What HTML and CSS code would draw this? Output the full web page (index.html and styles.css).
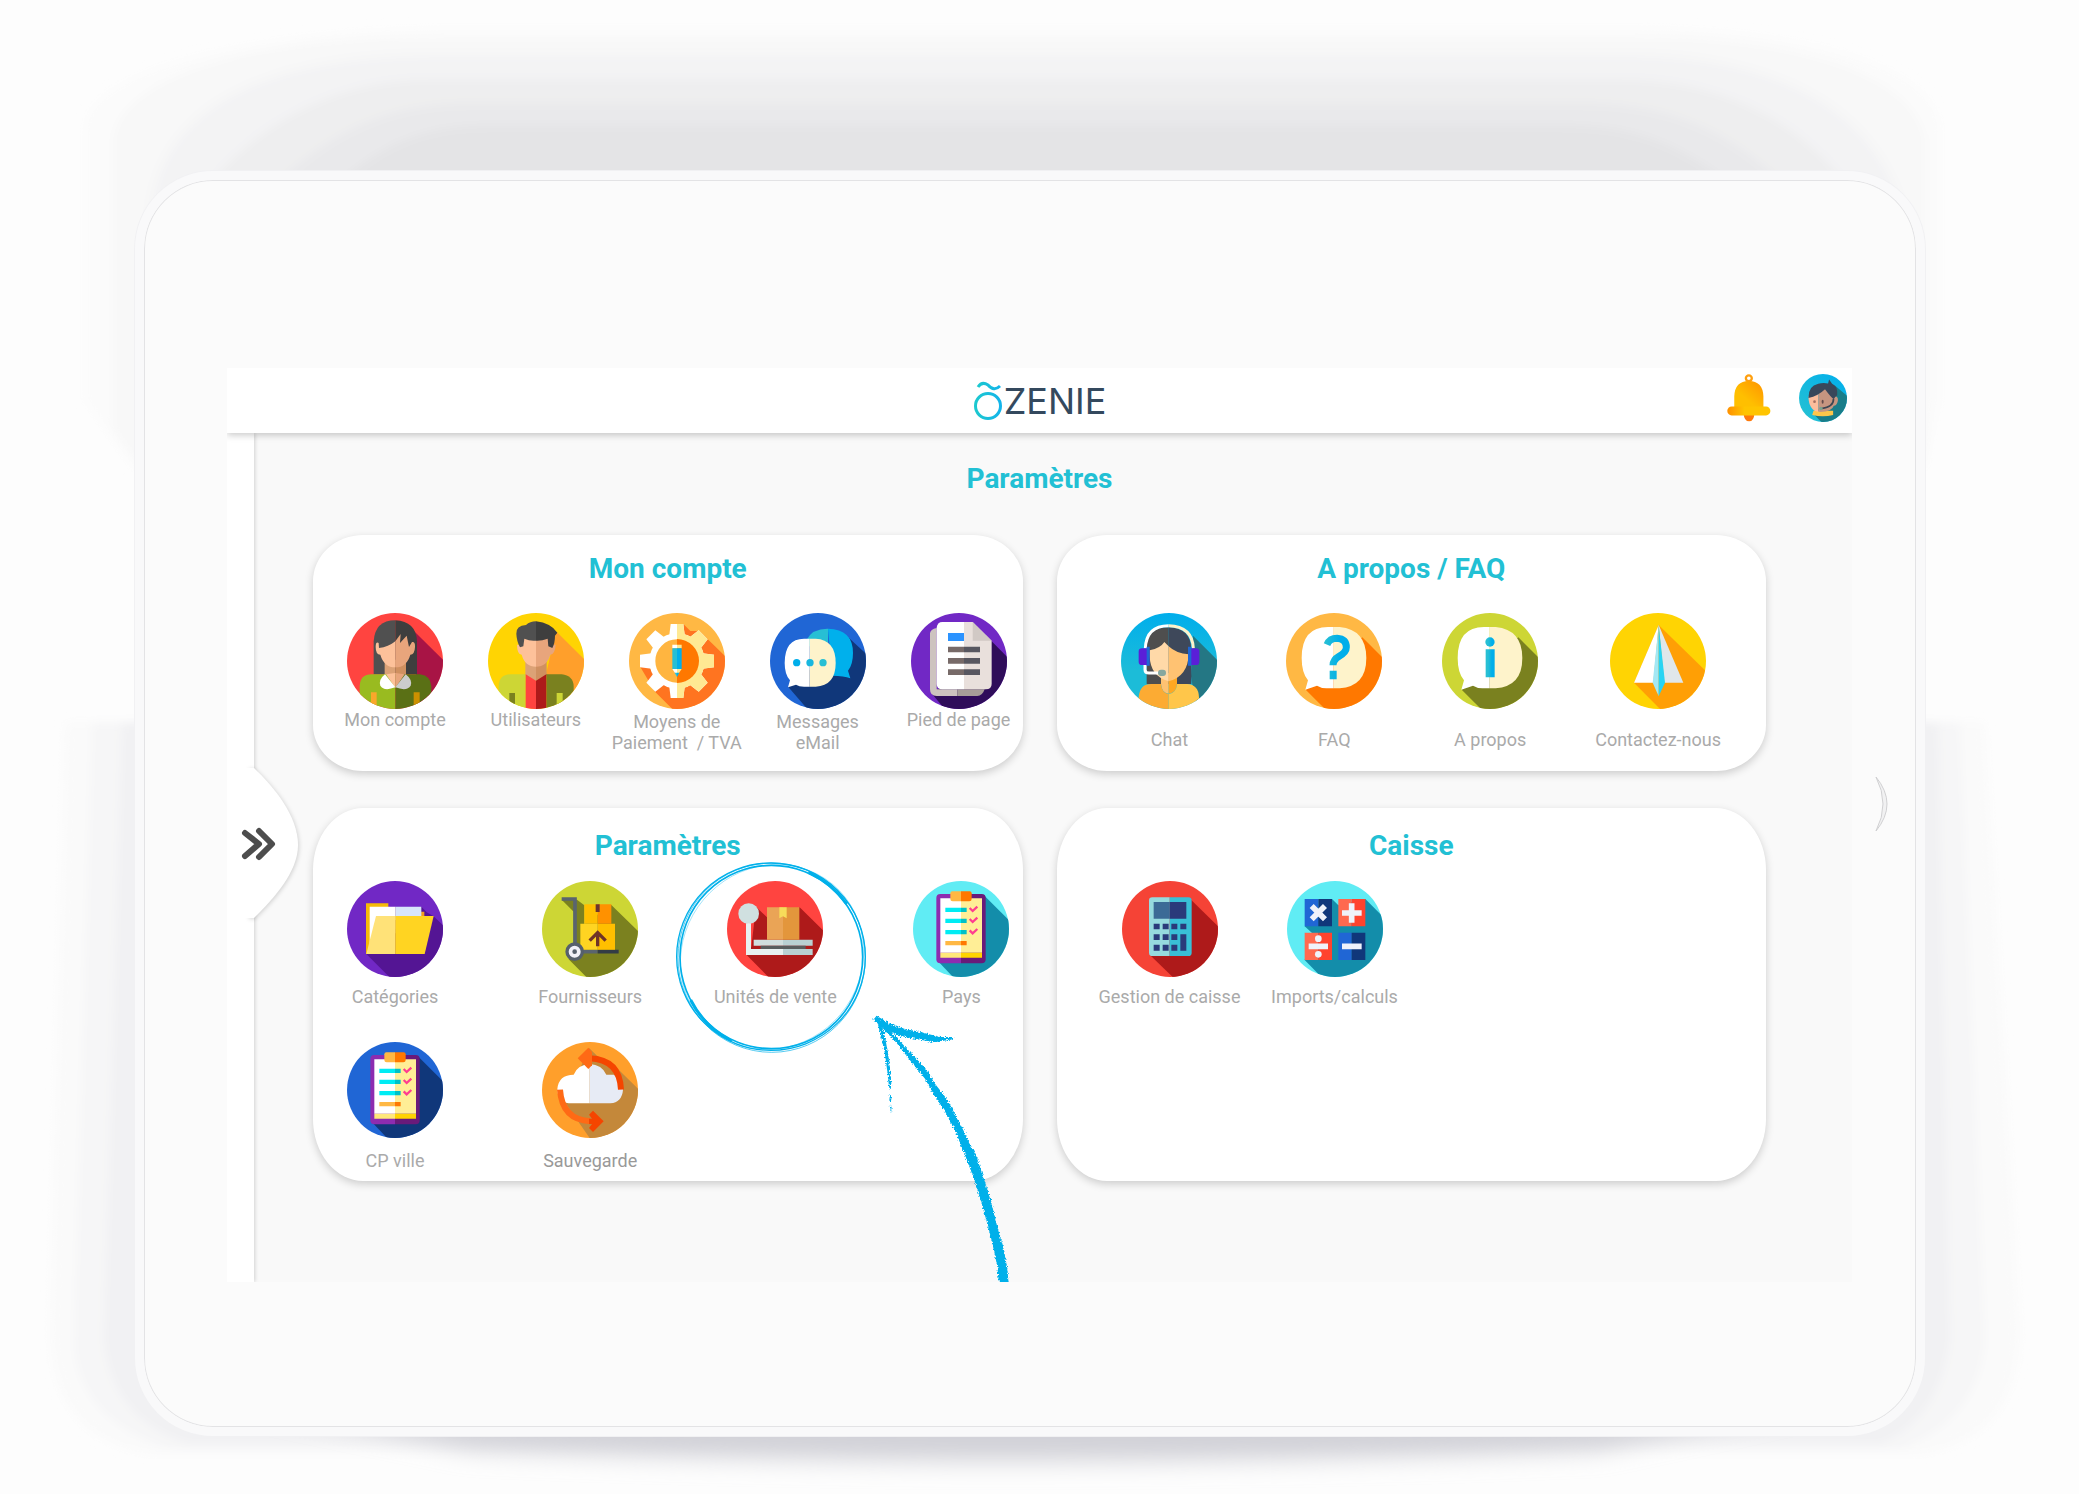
FILE: index.html
```html
<!DOCTYPE html>
<html lang="fr">
<head>
<meta charset="utf-8">
<meta name="viewport" content="width=device-width, initial-scale=1">
<title>Ozenie - Paramètres</title>
<link rel="stylesheet" href="styles.css">
</head>
<body>
<svg class="backdrop" viewBox="0 0 2079 1494" preserveAspectRatio="none" aria-hidden="true">
  <defs><filter id="soft" x="-10%" y="-10%" width="120%" height="120%"><feGaussianBlur stdDeviation="5"/></filter>
  <filter id="softer" x="-10%" y="-200%" width="120%" height="500%"><feGaussianBlur stdDeviation="12"/></filter></defs>
  <g filter="url(#soft)">
    <path fill="#fbfbfb" d="M85 400V130C85 60 300 28 450 28H1640C1780 28 1940 60 1940 130V400L1925 470H135Z"/>
    <path fill="#f8f8f8" d="M113 430V140C120 70 280 38 400 38H1660C1780 38 1915 70 1925 140V460H135Z"/>
    <path fill="#f3f3f4" d="M150 220C155 110 260 55 440 55H1620C1780 55 1880 110 1905 220Z"/>
    <path fill="#eeeeef" d="M205 190C260 120 340 80 430 80H1620C1720 80 1800 120 1850 190Z"/>
    <path fill="#e9e9eb" d="M270 190C330 130 390 103 470 103H1580C1670 103 1730 130 1790 190Z"/>
    <path fill="#e4e4e6" d="M330 190C380 145 420 125 490 125H1560C1640 125 1680 145 1740 190Z"/>
    <path fill="#fafafa" d="M65 723H1985L2020 1330Q2020 1440 1920 1455H150Q50 1440 50 1330Z"/>
    <path fill="#f6f6f7" d="M92 723H1960L1985 1340Q1980 1420 1900 1450H170Q75 1420 74 1340Z"/>
    <path fill="#f1f1f3" d="M122 723H1938L1950 1340Q1940 1420 1880 1445H190Q110 1420 104 1340Z"/>
  </g>
  <path filter="url(#softer)" fill="#d2d2d8" d="M230 1400H1830L1600 1450Q1040 1474 470 1450Z"/>
</svg>

<svg class="defs" aria-hidden="true">
  <symbol id="clipboard" viewBox="0 0 288 288">
    <path fill="#8d2cb0" d="M144 39H82Q70 39 70 51V235Q70 247 82 247H144Z"/><path fill="#691a7a" d="M144 39H206Q218 39 218 51V235Q218 247 206 247H144Z"/>
    <path fill="#fff" d="M82 52H144V215H82Z"/><path fill="#ffee96" d="M144 52H207V215H144Z"/>
    <path fill="#ffe87a" d="M82 215H144V230H82Z"/><path fill="#ffd300" d="M144 215H207V230H144Z"/>
    <path fill="#ffb844" d="M144 31H118Q112 31 112 37V54Q112 61 119 61H144Z"/><path fill="#ff7800" d="M144 31H170Q176 31 176 37V54Q176 61 169 61H144Z"/>
    <path fill="#00ecf4" d="M97 80H144V93H97ZM97 113H144V126H97ZM97 147H144V160H97Z"/><path fill="#00c0c8" d="M144 80H161V93H144ZM144 113H161V126H144ZM144 147H161V160H144Z"/>
    <path fill="#ffb844" d="M97 180H144V193H97Z"/><path fill="#ff7800" d="M144 180H161V193H144Z"/>
    <path fill="none" stroke="#ff3d90" stroke-width="7" d="M170 81L179 90L193 77M170 114L179 123L193 110M170 148L179 157L193 144"/>
  </symbol>
</svg>

<div class="device">
  <div class="screen">
    <header class="topbar">
      <a class="logo" href="#" aria-label="Ozenie">
        <svg class="logo-mark" viewBox="0 0 30 40" aria-hidden="true"><defs><linearGradient id="lg"><stop offset="0" stop-color="#1cc8cf"/><stop offset="1" stop-color="#14b4ea"/></linearGradient></defs><circle cx="15" cy="25" r="12.5" fill="none" stroke="url(#lg)" stroke-width="3"/><path d="M5 6Q9 0 15 4Q21 11 27 5" fill="none" stroke="url(#lg)" stroke-width="3"/></svg><span>ZENIE</span>
      </a>
      <div class="actions">
        <button class="action" type="button" aria-label="Notifications">
          <svg width="44" height="48" viewBox="83 41 131 145"><defs><linearGradient id="bell" x1="1" y1="0" x2="0" y2="1"><stop offset="0" stop-color="#ff9000"/><stop offset=".6" stop-color="#ffbf00"/></linearGradient><linearGradient id="rim"><stop offset="0" stop-color="#ff9000"/><stop offset=".4" stop-color="#ffc400"/></linearGradient></defs><circle cx="148" cy="54" r="9" fill="none" stroke="#ffa010" stroke-width="7"/><path fill="#ff7a0c" d="M132 160H165Q163 184 149 184Q134 184 132 160Z"/><path fill="url(#bell)" d="M104 140V108Q106 62 148 62Q190 62 192 108V140L200 150H96Z"/><rect x="83" y="139" width="130" height="27" rx="13" fill="url(#rim)"/></svg>
        </button>
        <button class="action" type="button" aria-label="Profil">
          <svg class="round" width="48" height="48" viewBox="299 41 142 142"><defs><linearGradient id="av" x1="0" y1="1" x2="1" y2="0"><stop offset="0" stop-color="#27c2d0"/><stop offset="1" stop-color="#00aeee"/></linearGradient></defs><path fill="url(#av)" d="M299 41H441V183H299Z"/><path fill="#197d89" d="M405 75L441 105V183H365L345 162Z"/><path fill="#fdc64a" d="M342 150H400V162Q370 170 338 162Z"/><path fill="#fdbd9c" d="M327 108Q345 95 356 92V153Q328 148 327 108Z"/><path fill="#c69580" d="M356 92L376 85L400 107Q416 104 414 120Q411 135 402 135Q395 155 356 153Z"/><path fill="#39475a" d="M327 112Q326 76 356 70Q370 66 385 69L388 57L397 70Q415 78 412 104Q405 108 402 116Q392 108 376 86Q355 106 327 112Z"/><path d="M401 115Q402 138 366 143" fill="none" stroke="#3c4652" stroke-width="5"/><circle cx="345" cy="123" r="4" fill="#a87062"/><ellipse cx="369" cy="123" rx="3" ry="6" fill="#664d4c"/><circle cx="364" cy="143" r="5" fill="#7aa08c"/></svg>
        </button>
      </div>
    </header>

    <aside class="sidebar">
      <button class="drawer" type="button" aria-label="Ouvrir le menu">
        <svg width="84" height="166" viewBox="-33 -8 84 166"><path class="drawer-shape" d="M-6 0H0C20 19 44 48 44 77C44 104 20 130 0 150H-6Z"/><path fill="#fff" d="M-30 0H0V150H-30Z"/><path d="M-9 65L5 76L-9 88M5 63L18 76L5 89" fill="none" stroke="#4d4d4d" stroke-width="6" stroke-linecap="round" stroke-linejoin="round"/></svg>
      </button>
    </aside>

    <main class="content">
      <h1 class="title">Paramètres</h1>
      <div class="cards">
        <section class="card card--account">
          <h2 class="title">Mon compte</h2>
          <div class="items">
            <a class="item" href="#">
              <svg class="icon" viewBox="111 250 288 288"><path fill="#ff4440" d="M111 250H399V538H111Z"/><path fill="#a81445" d="M305 297L399 390V538H330L318 434Z"/><path fill="#505050" d="M191 434V335Q195 272 256 272V434Z"/><path fill="#3e3e3e" d="M256 272Q318 275 321 335V434H256Z"/><path fill="#dca276" d="M224 390H256V440H224Z"/><path fill="#d09060" d="M256 390H288V440H256Z"/><path fill="#fdc19a" d="M256 335Q235 352 207 355L206 340Q197 335 197 352Q197 375 211 375Q222 413 256 413Z"/><path fill="#e8a57c" d="M256 335L272 313L270 340L290 318L297 352L306 337Q316 335 315 352Q314 375 301 375Q290 413 256 413Z"/><path fill="#99bb20" d="M149 538V470Q150 434 185 434H256V538Z"/><path fill="#5a7015" d="M256 434H330Q362 438 364 470V538H256Z"/><path fill="#fdc19a" d="M228 434L256 430V474Z"/><path fill="#e8a57c" d="M284 434L256 430V474Z"/><path fill="#fff" d="M225 434Q205 450 211 468Q222 486 256 473Z"/><path fill="#ccc" d="M287 434Q308 450 302 468Q291 486 256 473Z"/><path fill="#f9a72b" d="M183 488H200V538H183Z"/><path fill="#cc9000" d="M311 488H329V538H311Z"/></svg>
              <span class="label">Mon compte</span>
            </a>
            <a class="item" href="#">
              <svg class="icon" viewBox="534 250 288 288"><path fill="#ffd403" d="M534 250H822V538H534Z"/><path fill="#ff9f2b" d="M738 305L822 388V538H760L708 434Z"/><path fill="#dca276" d="M646 390H678V455L646 436Z"/><path fill="#d09060" d="M678 390H710V436L678 455Z"/><path fill="#fdc19a" d="M636 325H678V411Q645 411 635 375Q621 373 621 345H636Z"/><path fill="#e8a57c" d="M678 325H720V345H737Q735 373 721 375Q711 411 678 411Z"/><path fill="#505050" d="M678 275Q660 275 648 286Q618 288 619 312Q620 335 630 353L640 350L643 327Q660 335 678 333Z"/><path fill="#3e3e3e" d="M678 275Q722 280 742 309L735 318Q735 340 727 355L715 350L713 327Q695 334 678 333Z"/><path fill="#cdd635" d="M566 538V470Q567 434 602 434H647V538Z"/><path fill="#7a811f" d="M709 434H755Q790 438 791 470V538H709Z"/><path fill="#ff4440" d="M647 434L678 453V538H647Z"/><path fill="#ae1a1a" d="M709 434L678 453V538H709Z"/><path fill="#7a811f" d="M598 490H615V538H598Z"/><path fill="#cdd635" d="M740 490H758V538H740Z"/></svg>
              <span class="label">Utilisateurs</span>
            </a>
            <a class="item" href="#">
              <svg class="icon" viewBox="-94 251 288 288"><defs><path id="tooth" d="M31 284H69L74 325H26Z"/><g id="gear"><circle cx="50" cy="395" r="74" fill="none" stroke-width="18" stroke="currentColor"/><g fill="currentColor"><use href="#tooth"/><use href="#tooth" transform="rotate(45 50 395)"/><use href="#tooth" transform="rotate(90 50 395)"/><use href="#tooth" transform="rotate(135 50 395)"/><use href="#tooth" transform="rotate(180 50 395)"/><use href="#tooth" transform="rotate(225 50 395)"/><use href="#tooth" transform="rotate(270 50 395)"/><use href="#tooth" transform="rotate(315 50 395)"/></g></g><clipPath id="half"><path d="M50 250H200V540H50Z"/></clipPath></defs><path fill="#ffb844" d="M-94 251H194V539H-94Z"/><path fill="#ff7420" d="M69 284L90 305L117 305L194 380V539H36L-16 487L-60 413L50 395Z"/><circle cx="50" cy="395" r="68" fill="#ffb540"/><use href="#gear" color="#fff"/><g clip-path="url(#half)"><use href="#gear" color="#ffe993"/><circle cx="50" cy="395" r="66" fill="#ff7800"/></g><path fill="#fff" d="M36 346H50V357H36ZM36 419H50V440Z"/><path fill="#ffe993" d="M50 346H64V357H50ZM50 419H64L50 440Z"/><path fill="#27bfd4" d="M36 357H50V419H36ZM43 430H50V443Z"/><path fill="#00aeea" d="M50 357H64V419H50ZM50 430H57L50 443Z"/></svg>
              <span class="label label--two">Moyens de<br>Paiement&nbsp; / TVA</span>
            </a>
            <a class="item" href="#">
              <svg class="icon" viewBox="328 250 288 288"><path fill="#2066d5" d="M328 250H616V538H328Z"/><path fill="#10377a" d="M565 325L616 372V538H440L383 472Z"/><path fill="#27bfd4" d="M438 330Q455 297 500 297H502V350H438Z"/><path fill="#00b0ec" d="M502 297Q577 299 577 370Q577 405 562 423L569 446Q550 438 515 438Z"/><path fill="#fff" d="M372 400Q372 327 430 327H447V471H430Q415 471 406 465L382 473L388 452Q372 435 372 400Z"/><path fill="#fef3cb" d="M447 327H465Q525 330 525 400Q525 468 465 471H447Z"/><circle cx="408" cy="399" r="11" fill="#00aeea"/><circle cx="448" cy="399" r="11" fill="#18b7df"/><circle cx="487" cy="399" r="11" fill="#27bfd4"/></svg>
              <span class="label label--two">Messages<br>eMail</span>
            </a>
            <a class="item" href="#">
              <svg class="icon" viewBox="751 251 288 288"><path fill="#7128c5" d="M751 251H1039V539H751Z"/><path fill="#2f0d5a" d="M990 333L1039 382V539H852L815 495Z"/><path fill="#cdc3bf" d="M808 312Q809 300 828 296V480H890V500H828Q808 500 808 480Z"/><path fill="#a79e98" d="M890 480H972Q965 500 950 500H890Z"/><path fill="#fff" d="M828 295Q830 278 845 278H910V480H845Q828 480 828 463Z"/><path fill="#e9e0dc" d="M910 278H936L993 334V463Q993 480 975 480H910Z"/><path fill="#d1c9c5" d="M936 278L993 334H936Z"/><path fill="#2b93ff" d="M862 311H910V335H862Z"/><path fill="#776a68" d="M862 352H910V369H862ZM862 386H910V403H862ZM862 420H910V437H862Z"/><path fill="#585760" d="M910 352H958V369H910ZM910 386H958V403H910ZM910 420H958V437H910Z"/></svg>
              <span class="label">Pied de page</span>
            </a>
          </div>
        </section>

        <section class="card card--about">
          <h2 class="title">A propos / FAQ</h2>
          <div class="items">
            <a class="item" href="#">
              <svg class="icon" viewBox="214 250 288 288"><defs><linearGradient id="sky" x1="0" y1="0" x2="0" y2="1"><stop offset="0" stop-color="#00aeec"/><stop offset=".6" stop-color="#1cbcd8"/></linearGradient></defs><path fill="url(#sky)" d="M214 250H502V538H214Z"/><path fill="#247784" d="M430 318L502 390V538H440L424 440Z"/><path fill="#4e4e4e" d="M291 463V350Q293 293 357 293V463Z"/><path fill="#3e485a" d="M357 293Q424 295 425 360V463H357Z"/><path fill="#ffc272" d="M334 430H357V492Q336 490 334 463Z"/><path fill="#ffa822" d="M357 430H382V463Q380 490 357 492Z"/><path fill="#ffd9a8" d="M300 362Q333 355 344 337L357 350V455Q302 440 300 380Z"/><path fill="#ffc272" d="M357 350Q380 372 417 374Q415 440 357 455Z"/><path fill="#fcab33" d="M267 538V503Q270 463 305 463H334Q336 490 357 493V538Z"/><path fill="#ffc64a" d="M357 493Q380 490 382 463H412Q447 465 448 503V538H357Z"/><path fill="none" stroke="#fff" stroke-width="9" d="M287 356Q290 288 357 288M286 405V420Q286 430 298 430H328" /><path fill="none" stroke="#fef3cb" stroke-width="9" d="M357 288Q428 290 431 356"/><rect x="267" y="356" width="32" height="50" rx="10" fill="#5a1fd8"/><rect x="417" y="356" width="32" height="50" rx="10" fill="#5a1fd8"/><path fill="#1f66d5" d="M291 351H300V408H291ZM415 351H425V408H415Z"/><rect x="325" y="420" width="24" height="19" rx="9" fill="#86a79f"/></svg>
              <span class="label">Chat</span>
            </a>
            <a class="item" href="#">
              <svg class="icon" viewBox="709 250 288 288"><path fill="#ffb844" d="M709 250H997V538H709Z"/><path fill="#ff7800" d="M938 323L997 382V538H826L768 480Z"/><path fill="#fff" d="M756 385Q756 292 835 292H852V476H830Q815 476 802 468L767 480L775 452Q756 430 756 385Z"/><path fill="#fef3cb" d="M852 292H870Q950 300 950 385Q950 470 870 476H852Z"/><defs><linearGradient id="mark" gradientUnits="userSpaceOnUse" x1="826" y1="0" x2="900" y2="0"><stop offset="0" stop-color="#27bfd4"/><stop offset=".6" stop-color="#00aeea"/></linearGradient></defs><path fill="none" stroke="url(#mark)" stroke-width="21" d="M832 345Q840 326 862 326Q890 328 890 353Q890 368 868 380Q850 390 850 407"/><path fill="url(#mark)" d="M840 423H861V449H840Z"/></svg>
              <span class="label">FAQ</span>
            </a>
            <a class="item" href="#">
              <svg class="icon" viewBox="127 250 288 288"><path fill="#cdd635" d="M127 250H415V538H127Z"/><path fill="#7a811f" d="M356 323L415 382V538H244L186 480Z"/><path fill="#fff" d="M174 385Q174 292 253 292H270V476H248Q233 476 220 468L185 480L193 452Q174 430 174 385Z"/><path fill="#fef3cb" d="M270 292H288Q368 300 368 385Q368 470 288 476H270Z"/><defs><linearGradient id="info" gradientUnits="userSpaceOnUse" x1="257" y1="0" x2="285" y2="0"><stop offset=".3" stop-color="#27bfd4"/><stop offset=".7" stop-color="#00aeea"/></linearGradient></defs><circle cx="271" cy="337" r="14" fill="url(#info)"/><path fill="url(#info)" d="M258 359H285V443H258Z"/></svg>
              <span class="label">A propos</span>
            </a>
            <a class="item" href="#">
              <svg class="icon" viewBox="630 250 288 288"><path fill="#ffd403" d="M630 250H918V538H630Z"/><path fill="#ff9f05" d="M776 286L918 425V538H780L702 459Z"/><path fill="#fff" d="M776 286L702 459H760Z"/><path fill="#e0e7ea" d="M776 286L850 459H793Z"/><path fill="#a4e8f4" d="M776 286L758 459L776 500Z"/><path fill="#28d4f3" d="M776 286L795 459L776 500Z"/></svg>
              <span class="label">Contactez-nous</span>
            </a>
          </div>
        </section>

        <section class="card card--settings">
          <h2 class="title">Paramètres</h2>
          <div class="items">
            <a class="item" href="#">
              <svg class="icon" viewBox="111 243 288 288"><path fill="#7128c5" d="M111 243H399V531H111Z"/><path fill="#541594" d="M334 320L350 337L371 349L399 376V531H238L169 462Z"/><path fill="#f5bb08" d="M168 310H235V322H256V462H168Z"/><path fill="#f29c1f" d="M330 335H343V355H330Z"/><path fill="#fff" d="M179 320H256V400H194L179 430Z"/><path fill="#d7e5fa" d="M256 320H334V360H256Z"/><path fill="#ffe278" d="M198 348H256V462H169Z"/><path fill="#ffd422" d="M256 348H371L344 462H256Z"/></svg>
              <span class="label">Catégories</span>
            </a>
            <a class="item" href="#">
              <svg class="icon" viewBox="695 243 288 288"><path fill="#cdd635" d="M695 243H983V531H695Z"/><path fill="#7b811f" d="M754 299H800L822 316V372L903 315L983 393V531H828L775 478L790 440V335Z"/><path fill="none" stroke="#5a646e" stroke-width="11" d="M754 297H794V440M815 455H862"/><path fill="none" stroke="#333c46" stroke-width="11" d="M862 455H925"/><path fill="#ffbf00" d="M822 313H862V371H822ZM862 371H914V449H862Z"/><path fill="#ff9100" d="M862 313H903V371H862Z"/><path fill="#ffd422" d="M810 371H862V449H810Z"/><path fill="#6b3430" d="M856 313H868V336H856Z"/><path fill="none" stroke="#6f3328" stroke-width="10" d="M862 439V400M838 422L862 398L886 422"/><circle cx="793" cy="455" r="23" fill="#f1f1f8" stroke="#56606c" stroke-width="10"/><circle cx="793" cy="455" r="7" fill="#56606c"/></svg>
              <span class="label">Fournisseurs</span>
            </a>
            <a class="item item--marked" href="#">
              <svg class="icon" viewBox="202 243 288 288"><path fill="#ff4440" d="M202 243H490V531H202Z"/><path fill="#ae1a1a" d="M289 320L322 352V400L420 322L490 391V531H326L261 465L275 440Z"/><circle cx="267" cy="341" r="31" fill="#d0e0e0"/><path fill="#e8f0f0" d="M259 370H274V447H370V465H259Z"/><path fill="#b9d0d2" d="M370 447H459V465H370ZM370 419H459V437H370Z"/><path fill="#d0dede" d="M282 419H370V437H282Z"/><path fill="#595d5e" d="M303 437H438V447H303Z"/><path fill="#eaa456" d="M322 322H370V419H322Z"/><path fill="#e3963c" d="M370 322H419V419H370Z"/><path fill="#f7dc5a" d="M359 322H381V355L370 349L359 355Z"/></svg>
              <span class="label">Unités de vente</span>
              <svg class="ring" viewBox="45 180 579 582" aria-hidden="true"><g fill="none" stroke="#00b0ea"><ellipse cx="334" cy="471" rx="274" ry="275" stroke-width="5"/><ellipse cx="333" cy="470" rx="283" ry="281" stroke-width="4"/><ellipse cx="335" cy="473" rx="281" ry="284" stroke-width="2"/><path d="M445 217A280 280 0 0 1 560 312M215 723A278 278 0 0 1 92 600" stroke-width="9"/><ellipse cx="336" cy="471" rx="268" ry="284" stroke-width="1" transform="rotate(40 336 471)"/></g></svg>
            </a>
            <a class="item" href="#">
              <svg class="icon" viewBox="0 0 288 288"><path fill="#60ecf4" d="M0 0H288V288H0Z"/><path fill="#138daa" d="M212 42L288 118V288H120L78 244Z"/><use href="#clipboard" width="288" height="288"/></svg>
              <span class="label">Pays</span>
            </a>
            <a class="item" href="#">
              <svg class="icon" viewBox="0 0 288 288"><path fill="#2066d5" d="M0 0H288V288H0Z"/><path fill="#10377a" d="M212 42L288 118V288H120L78 244Z"/><use href="#clipboard" width="288" height="288"/></svg>
              <span class="label">CP ville</span>
            </a>
            <a class="item" href="#">
              <svg class="icon" viewBox="695 727 288 288"><path fill="#ff9f2b" d="M695 727H983V1015H695Z"/><path fill="#c4883a" d="M836 745L860 768L925 810L983 867V1015H838L765 910Z"/><path fill="#fff" d="M838 911H775Q741 905 741 868Q745 825 790 825Q802 795 838 793Z"/><path fill="#e7ebf5" d="M838 793Q875 795 888 825H910Q938 835 938 870Q935 908 900 911H838Z"/><path fill="none" stroke="#f54500" stroke-width="18" d="M838 776Q928 780 932 870"/><path fill="#ff6a15" d="M802 776L834 744L845 757V797L834 808Z"/><path fill="none" stroke="#ff6a15" stroke-width="18" d="M749 870Q755 960 840 965"/><path fill="#f54500" d="M836 945L848 933L880 965L848 997L836 985L845 973H836V957H845Z"/></svg>
              <span class="label label--strong">Sauvegarde</span>
            </a>
          </div>
        </section>

        <section class="card card--till">
          <h2 class="title">Caisse</h2>
          <div class="items">
            <a class="item" href="#">
              <svg class="icon" viewBox="214 239 288 288"><path fill="#f54336" d="M214 239H502V527H214Z"/><path fill="#ae1a1a" d="M421 295L502 375V527H366L298 461Z"/><path fill="#96dade" d="M357 288H305Q295 288 295 298V454Q295 464 305 464H357Z"/><path fill="#39bfd6" d="M357 288H413Q423 288 423 298V454Q423 464 413 464H357Z"/><path fill="#3c6a96" d="M309 302H357V352H309Z"/><path fill="#2a3a7a" d="M357 302H407V352H357ZM309 367H327V384H309ZM336 367H354V384H336ZM362 367H380V384H362ZM389 367H407V384H389ZM309 399H327V416H309ZM336 399H354V416H336ZM362 399H380V416H362ZM389 399H407V448H389ZM309 430H327V448H309ZM336 430H354V448H336ZM362 430H380V448H362Z"/></svg>
              <span class="label">Gestion de caisse</span>
            </a>
            <a class="item" href="#">
              <svg class="icon" viewBox="709 239 288 288"><path fill="#60ecf4" d="M709 239H997V527H709Z"/><path fill="#138daa" d="M844 293L863 312L944 293L997 346V527H812L762 476L785 396L762 375Z"/><path fill="#2066d5" d="M762 293H803V375H762ZM863 394H903V476H863Z"/><path fill="#10377a" d="M803 293H844V375H803ZM903 394H944V476H903Z"/><path fill="#ff694f" d="M863 293H903V375H863ZM762 394H803V476H762Z"/><path fill="#ff432e" d="M903 293H944V375H903ZM803 394H844V476H803Z"/><path stroke="#eff2fa" stroke-width="17" fill="none" d="M783 314L823 354M823 314L783 354M903 306V364M874 335H933M774 435H832M874 435H933"/><circle cx="803" cy="412" r="10" fill="#eff2fa"/><circle cx="803" cy="459" r="10" fill="#eff2fa"/></svg>
              <span class="label">Imports/calculs</span>
            </a>
          </div>
        </section>
      </div>
    </main>

    <svg class="arrow" viewBox="630 641 426 804" aria-hidden="true"><defs><filter id="rough" x="-5%" y="-5%" width="110%" height="110%"><feTurbulence type="fractalNoise" baseFrequency=".2" numOctaves="3" seed="4"/><feDisplacementMap in="SourceGraphic" scale="14" xChannelSelector="R" yChannelSelector="G"/></filter></defs><g fill="#00b0ea" filter="url(#rough)"><path d="M650 660L668 684L710 728L750 780L795 835L823 885L856 935L885 990L915 1065L940 1130L962 1200L982 1270L1000 1340L1012 1400L1018 1460H1047L1042 1405L1032 1350L1012 1280L995 1210L975 1145L950 1070L920 1010L893 955L860 895L825 850L800 808L755 760L710 712L675 678Z"/><path d="M640 658L650 646L690 670L735 686L790 697L840 710L884 710L870 718L820 726L770 716L715 706L670 682Z"/><path d="M652 665L665 670L677 720L688 785L694 850L688 870L683 820L673 750L662 705ZM690 880L695 890L692 908L688 900ZM689 915L695 920L693 937Z"/></g></svg>
  </div>
  <svg class="home" width="16" height="58" viewBox="0 0 16 58" aria-hidden="true"><path d="M2 2Q24 29 2 56Q16 29 2 2Z" fill="#f1f1f2" stroke="#d0d0d2"/></svg>
</div>
</body>
</html>
```
FILE: styles.css
```css
* { box-sizing: border-box; }

body {
  margin: 0;
  padding: 171px 154px 57px 135px;
  background: #fdfdfd;
  font-family: Roboto, "Liberation Sans", sans-serif;
  position: relative;
}

.backdrop {
  position: absolute;
  inset: 0;
  width: 100%;
  height: 100%;
  z-index: -1;
}

.defs { position: absolute; width: 0; height: 0; }

/* Tablet frame */
.device {
  position: relative;
  padding: 188px 64px 145px 83px;
  border: 9px solid #f9f9fa;
  border-radius: 78px;
  background: #fbfbfb;
  box-shadow: inset 0 0 0 1px #e3e3e5, 0 0 0 1px #f1f1f3;
}

.home {
  position: absolute;
  top: 50%;
  right: 26px;
  transform: translateY(-50%);
}

.screen {
  position: relative;
  display: grid;
  grid-template: auto 1fr / 27px 1fr;
  aspect-ratio: 16 / 9;
  background: #f9f9f9;
}

.topbar {
  grid-column: 1 / -1;
  position: relative;
  z-index: 2;
  display: grid;
  grid-template-columns: 1fr auto 1fr;
  align-items: center;
  height: 65px;
  padding: 0 5px;
  background: #fff;
  box-shadow: 0 2px 7px rgba(0, 0, 0, .22);
  clip-path: inset(0 0 -12px 0);
}

.logo {
  grid-column: 2;
  display: flex;
  align-items: center;
  gap: 1px;
  color: #34495e;
  font: 36px/40px Inter, sans-serif;
  text-decoration: none;
}

.logo-mark { width: 30px; height: 40px; }

.actions {
  display: flex;
  justify-content: flex-end;
  gap: 28px;
  margin-bottom: 6px;
}

.action {
  padding: 0;
  border: 0;
  background: none;
}

.action svg { display: block; }
.round { border-radius: 50%; }

/* Folded side drawer */
.sidebar {
  position: relative;
  background: #fff;
  box-shadow: 1px 0 4px rgba(0, 0, 0, .16);
  clip-path: inset(0 -60px 0 0);
}

.drawer {
  position: absolute;
  top: 327px;
  left: -6px;
  padding: 0;
  border: 0;
  background: none;
}

.drawer svg { display: block; }

.drawer-shape {
  fill: #fff;
  filter: drop-shadow(1px 1px 2px rgba(0, 0, 0, .16));
}

/* Settings cards */
.content { padding: 28px 86px 90px 59px; }

.title {
  margin: 0;
  color: #22c0d4;
  font-size: 28px;
  font-weight: 700;
  line-height: 36px;
  text-align: center;
}

.cards {
  display: grid;
  grid-template-columns: 1fr 1fr;
  gap: 37px 34px;
  margin-top: 38px;
}

.card {
  border-radius: 50px / 46px;
  background: #fff;
  box-shadow: 0 3px 8px rgba(0, 0, 0, .18);
}

.items { display: grid; }

.item {
  position: relative;
  display: flex;
  flex-direction: column;
  align-items: center;
  width: 96px;
  color: #aaa;
  font-size: 18px;
  line-height: 21px;
  text-align: center;
  text-decoration: none;
}

.icon {
  width: 96px;
  height: 96px;
  border-radius: 50%;
}

.label { white-space: nowrap; }
.label--two { margin-top: 2px; }
.label--strong { color: #999; }

.card--account,
.card--about { padding-top: 16px; }

.card--account .items,
.card--about .items { margin-top: 26px; }

.card--account .items {
  display: flex;
  justify-content: space-between;
  padding: 0 16px 18px 34px;
}

.card--about .items {
  grid-template-columns: 166fr 164fr 148fr 188fr;
  justify-items: center;
  padding: 0 14px 0 30px;
}

.card--about .label { margin-top: 20px; }

.card--settings,
.card--till {
  padding-top: 20px;
  border-radius: 50px / 62px;
}

.card--settings .items,
.card--till .items { margin-top: 17px; }

.card--settings .items {
  grid-template-columns: 195fr 185fr 186fr 96px;
  row-gap: 35px;
  padding: 0 13px 10px 34px;
}

.card--till .items {
  grid-template-columns: 165px 165px;
  padding-left: 65px;
}

.card--settings .label,
.card--till .label { margin-top: 9px; }

.card--settings .item:nth-child(n+5) .label { margin-top: 12px; }

/* Hand-drawn marks */
.ring {
  position: absolute;
  top: -21px;
  left: -52px;
  width: 193px;
  height: 194px;
}

.arrow {
  position: absolute;
  left: 643px;
  bottom: 0;
  width: 142px;
  height: 268px;
  overflow: hidden;
}
```
